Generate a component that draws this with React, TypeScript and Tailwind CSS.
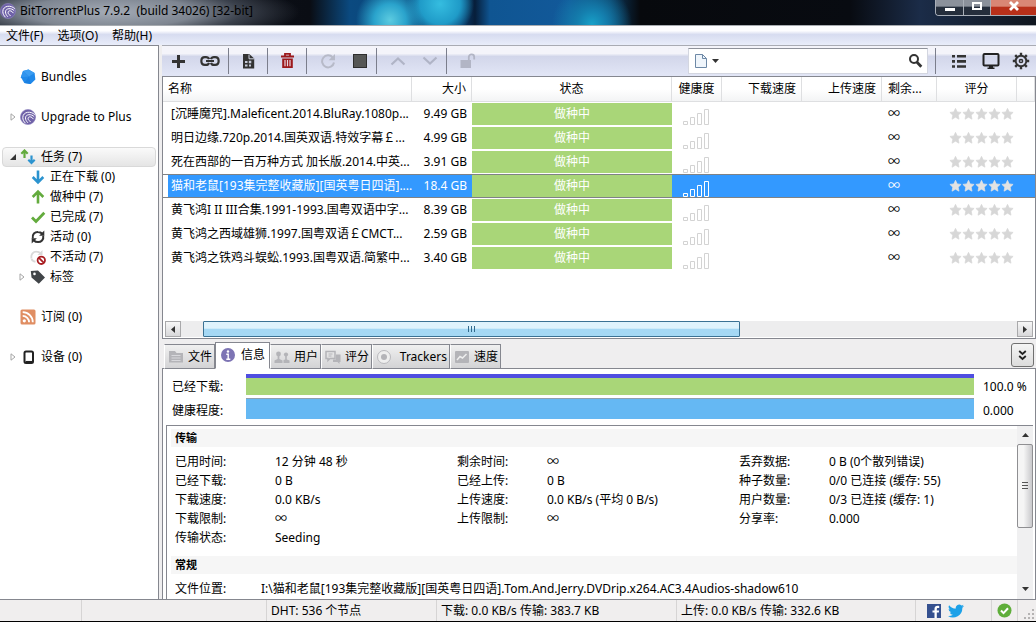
import React, { useState } from 'react';

interface Torrent {
  name: string;
  size: string;
}

interface IconProps {
  className?: string;
}

const TORRENTS: Torrent[] = [
  { name: '[沉睡魔咒].Maleficent.2014.BluRay.1080p...', size: '9.49 GB' },
  { name: '明日边缘.720p.2014.国英双语.特效字幕￡...', size: '4.99 GB' },
  { name: '死在西部的一百万种方式 加长版.2014.中英...', size: '3.91 GB' },
  { name: '猫和老鼠[193集完整收藏版][国英粤日四语]....', size: '18.4 GB' },
  { name: '黄飞鸿I II III合集.1991-1993.国粤双语中字...', size: '8.39 GB' },
  { name: '黄飞鸿之西域雄狮.1997.国粤双语￡CMCT...', size: '2.59 GB' },
  { name: '黄飞鸿之铁鸡斗蜈蚣.1993.国粤双语.简繁中...', size: '3.40 GB' },
];

const STATS: [string, string][][] = [
  [
    ['已用时间:', '12 分钟 48 秒'],
    ['已经下载:', '0 B'],
    ['下载速度:', '0.0 KB/s'],
    ['下载限制:', '∞'],
    ['传输状态:', 'Seeding'],
  ],
  [
    ['剩余时间:', '∞'],
    ['已经上传:', '0 B'],
    ['上传速度:', '0.0 KB/s (平均 0 B/s)'],
    ['上传限制:', '∞'],
  ],
  [
    ['丢弃数据:', '0 B (0个散列错误)'],
    ['种子数量:', '0/0 已连接 (缓存: 55)'],
    ['用户数量:', '0/3 已连接 (缓存: 1)'],
    ['分享率:', '0.000'],
  ],
];

/* ---------- Icons ---------- */

const BtLogo: React.FC<IconProps> = ({ className }) => (
  <svg className={className} viewBox="0 0 16 16" fill="none" stroke="#fff" strokeLinecap="round">
    <circle cx="8" cy="8" r="7.6" fill="#6f62a8" stroke="#8f84c0" strokeWidth=".6" />
    <path d="M14.500 5.500C11 1.600 3 2.600 2.800 8.400c0 2.500 1 4.200 2.500 5.600" strokeWidth="1" />
    <path d="M14 7.500C11.500 4.600 5.600 5 5.500 8.900c0 1.900.8 3.200 2.100 4.600" strokeWidth="1" />
    <path d="M13.200 9.800C11.600 7 8 7.200 8.100 9.600c.1 1.300.9 2.200 2.200 2.900" strokeWidth="1" />
  </svg>
);

const Bundle = () => (
  <svg className="size-4" viewBox="0 0 16 16">
    <path d="M8.500.6 14.600 4l.8 6.500-4.700 4.600-6.400-1L.9 8.300 3 2z" fill="#2089ea" />
    <path d="M8.500.6 14.600 4 9 7.500 3 2z" fill="#3b9df2" />
    <path d="M9 7.500.9 8.300 3 2z" fill="#3094ee" />
    <path d="m9 7.500 1.700 7.600-6.400-1z" fill="#1a80e2" />
  </svg>
);

const Tasks = () => (
  <svg className="size-4" viewBox="0 0 16 16" fill="none" strokeWidth="2.200">
    <path d="M4.500 9V1.500M1.300 4.700 4.500 1.500l3.200 3.200" stroke="#63ab3d" />
    <path d="M11.500 6.500V14M8.300 10.800 11.500 14l3.200-3.200" stroke="#2b93cf" />
  </svg>
);

const ArrowDown = () => (
  <svg className="size-4" viewBox="0 0 16 16" fill="none" stroke="#2b93cf" strokeWidth="2.600">
    <path d="M8 1.500V13M2.700 8 8 13.300 13.300 8" />
  </svg>
);

const ArrowUp = () => (
  <svg className="size-4" viewBox="0 0 16 16" fill="none" stroke="#63ab3d" strokeWidth="2.600">
    <path d="M8 14.500V3M2.700 8 8 2.700 13.300 8" />
  </svg>
);

const Check = () => (
  <svg className="size-4" viewBox="0 0 16 16" fill="none" stroke="#63ab3d" strokeWidth="2.800">
    <path d="m2 8.500 4 4L14.300 3.800" />
  </svg>
);

const Cycle = () => (
  <svg className="size-4" viewBox="0 0 16 16">
    <g fill="none" stroke="#333" strokeWidth="2">
      <path d="M2.800 9.500C1.900 5 5 2.800 8 2.900c1.900 0 3.200.7 4.300 1.900" />
      <path d="M13.200 6.800C14 11 11 13.200 8 13.100c-1.900 0-3.200-.7-4.300-1.900" />
    </g>
    <path d="M14.300 1.500v5.200H9.100zM1.700 14.500V9.300h5.200z" fill="#333" />
  </svg>
);

const Inactive = () => (
  <svg className="size-4" viewBox="0 0 16 16">
    <g fill="none" stroke="#d9d9d9" strokeWidth="1.800">
      <path d="M1.500 9.500C.6 5 3.500 2.600 6.500 2.700c1.900 0 3.200.7 4.300 1.900M1.500 10c1 1.800 2.500 2.700 4 2.700" />
    </g>
    <path d="M12.500 1v5H7.500z" fill="#d9d9d9" />
    <circle cx="11.300" cy="11.300" r="3.700" fill="#fff" stroke="#a91e22" strokeWidth="1.800" />
    <path d="m8.700 8.700 5.200 5.200" stroke="#a91e22" strokeWidth="1.800" />
  </svg>
);

const Tag = () => (
  <svg className="size-4" viewBox="0 0 16 16">
    <path fillRule="evenodd" d="M.8 2 8 1.500l7 6.900-6.200 6.400L1.500 8.500zM4.500 3.600a1.300 1.300 0 1 0 0 2.600 1.300 1.300 0 0 0 0-2.600z" fill="#414548" />
  </svg>
);

const Rss = () => (
  <svg className="size-4" viewBox="0 0 16 16">
    <rect x=".5" y=".5" width="15" height="15" rx="1.500" fill="#e08e63" />
    <circle cx="4.300" cy="11.800" r="1.600" fill="#fff" />
    <path d="M2.700 6.900a6.400 6.400 0 0 1 6.400 6.400M2.700 3.200A10.100 10.100 0 0 1 12.800 13.300" fill="none" stroke="#fff" strokeWidth="1.800" />
  </svg>
);

const Device = () => (
  <svg className="size-4" viewBox="0 0 16 16">
    <rect x="4.500" y="2.500" width="8.500" height="11.500" rx="1.500" fill="#fff" stroke="#222" strokeWidth="2" />
    <path d="M5.500 12.700h6.500" stroke="#222" strokeWidth="1.500" />
  </svg>
);

const Twisty = () => (
  <svg className="w-1.5 h-2" viewBox="0 0 6 8">
    <path d="M1 .8v6.400L5 4z" fill="#fff" stroke="#a5a5a5" />
  </svg>
);

const TwistyOpen = () => (
  <svg className="w-1.5 h-2" viewBox="0 0 6 8">
    <path d="M6 1v6H0z" fill="#333" />
  </svg>
);

const PlusIcon = () => (
  <svg className="size-4" viewBox="0 0 16 16">
    <path d="M8.500 2v13M2 8.500h13" stroke="#333" strokeWidth="3" />
  </svg>
);

const LinkIcon = () => (
  <svg className="w-5 h-4" viewBox="0 0 20 16" fill="none" stroke="#333" strokeWidth="2.200">
    <path d="M9 6.200C8.500 4.700 7.500 4.100 6 4.100H4.800C.2 4.100.2 11.900 4.800 11.900H6c1.500 0 2.500-.6 3-2.100M11 6.200c.5-1.500 1.500-2.100 3-2.100h1.200c4.600 0 4.600 7.800 0 7.800H14c-1.500 0-2.500-.6-3-2.100M6 8h8" />
  </svg>
);

const FileIcon = () => (
  <svg className="size-4" viewBox="0 0 16 16">
    <path d="M3 1h6.300l4.900 4.500V15.500H3z" fill="#333" />
    <path d="M9 1.500v4.300h5" fill="none" stroke="#dfe3f3" strokeWidth=".9" />
    <path d="M5 8h2.500v2H5zM8.800 7.700h2.500v2.600H8.800zM5 11.500h2.500v2H5zM9 11.500h2v2H9z" fill="#c5c9d8" />
  </svg>
);

const TrashIcon = () => (
  <svg className="size-4" viewBox="0 0 16 16">
    <path d="M6 2.500V.8h5v1.700M2 3.500h13" fill="none" stroke="#9c191c" strokeWidth="1.800" />
    <path d="M3.200 5.500h10.600V15H3.200z" fill="#9c191c" />
    <path d="M6 7v6.200M8.500 7v6.200M11 7v6.200" stroke="#e8d4de" strokeWidth="1.200" />
  </svg>
);

const RefreshIcon = () => (
  <svg className="size-4" viewBox="0 0 16 16">
    <path d="M12.700 4.500A6 6 0 1 0 14 9.500" fill="none" stroke="#b7bac8" strokeWidth="2" />
    <path d="M15 1v6.300H8.700z" fill="#b7bac8" />
  </svg>
);

const StopIcon = () => (
  <svg className="size-4" viewBox="0 0 16 16">
    <rect x="1.500" y="1.500" width="13" height="13" fill="#565756" stroke="#2e2e2e" />
  </svg>
);

const ChevronIcon: React.FC<{ up?: boolean }> = ({ up }) => (
  <svg className="size-4" viewBox="0 0 16 16" fill="none" stroke="#b0b4c6" strokeWidth="2.200">
    <path d={up ? 'm1.500 11.500 6.500-6 6.500 6' : 'm1.500 4.500 6.500 6 6.500-6'} />
  </svg>
);

const LockIcon = () => (
  <svg className="size-4" viewBox="0 0 16 16">
    <rect x=".5" y="7" width="10.500" height="8" fill="#b2b5c5" />
    <path d="M8.800 7V4c0-3.400 5.400-3.400 5.400 0v2.500" fill="none" stroke="#b2b5c5" strokeWidth="1.800" />
  </svg>
);

const SearchIcon = () => (
  <svg className="size-4" viewBox="0 0 16 16" fill="none" stroke="#333">
    <circle cx="7" cy="6" r="4" strokeWidth="2" />
    <path d="m9.800 9 4.500 4.800" strokeWidth="2.800" />
  </svg>
);

const ListIcon = () => (
  <svg className="size-4" viewBox="0 0 16 16" stroke="#333" strokeWidth="2.600">
    <path d="M1 3.300h3M6 3.300h9M1 8.400h3M6 8.400h9M1 13.500h3M6 13.500h9" />
  </svg>
);

const MonitorIcon = () => (
  <svg className="size-[18px]" viewBox="0 0 18 18">
    <rect x="1.500" y="2" width="15" height="11.500" rx="1" fill="none" stroke="#222" strokeWidth="2" />
    <path d="M7 13.500h4v2h1.500V17h-7v-1.500H7z" fill="#222" />
  </svg>
);

const GearIcon = () => (
  <svg className="size-[18px]" viewBox="0 0 18 18" fill="none" stroke="#333">
    <circle cx="9" cy="9" r="5.300" strokeWidth="1.900" />
    <circle cx="9" cy="9" r="1.600" strokeWidth="1.500" />
    <path d="M9 .8v3M9 14.200v3M.8 9h3M14.200 9h3M3.200 3.200l2.100 2.100M12.700 12.700l2.100 2.100M3.200 14.800l2.100-2.100M12.700 5.300l2.100-2.100" strokeWidth="2.400" />
  </svg>
);

const SignalBars: React.FC<{ selected: boolean }> = ({ selected }) => (
  <svg className="w-[27px] h-[17px]" viewBox="0 0 27 17" fill="none" stroke={selected ? '#fff' : '#d3d3d3'}>
    <path d="M.5 13.500h4v3h-4zM7.500 9.500h4v7h-4zM14.500 5.500h4v11h-4zM21.500 1.500h4v15h-4z" />
  </svg>
);

const Stars: React.FC<{ selected: boolean }> = ({ selected }) => (
  <svg className="w-[65px] h-3" viewBox="0 0 65 12" fill={selected ? '#e3e3e3' : '#d7d7d7'} stroke={selected ? '#e3e3e3' : '#d7d7d7'} strokeWidth=".7">
    {[0, 13, 26, 39, 52].map(x => (
      <path key={x} transform={`translate(${x} 0)`} d="m6.500.3 1.700 3.600 3.900.5-2.900 2.800.8 4-3.500-2-3.500 2 .8-4L.9 4.400l3.900-.5z" />
    ))}
  </svg>
);

const FilesTabIcon = () => (
  <svg className="size-4" viewBox="0 0 16 16">
    <path d="M1 2h6l1.500 2H15v9.500H1z" fill="#b4b4b8" />
    <path d="M3.500 6.500h9M3.500 9h9M3.500 11.500h9" stroke="#d8d8dc" />
  </svg>
);

const InfoTabIcon = () => (
  <svg className="size-4" viewBox="0 0 16 16">
    <circle cx="8" cy="8" r="7" fill="#7d74b4" />
    <circle cx="8" cy="4.500" r="1.200" fill="#fff" />
    <path d="M6.300 7.300H8.200v5M6.300 12.200h4" stroke="#fff" strokeWidth="1.400" fill="none" />
  </svg>
);

const PeersTabIcon = () => (
  <svg className="size-4" viewBox="0 0 16 16" fill="#b4b4b8">
    <circle cx="4.500" cy="5" r="2.400" />
    <path d="M3.600 6h1.800v4l3.100 1.500V14H.5v-2.500L3.600 10z" />
    <circle cx="12" cy="5.500" r="2.100" />
    <path d="M11.200 6.500h1.600V10.500l2.700 1V14H9.500v-3l1.700-.5z" />
  </svg>
);

const RatingTabIcon = () => (
  <svg className="size-4" viewBox="0 0 16 16">
    <path d="M1 2.500h9v7H5l-2 2v-2H1z" fill="none" stroke="#b4b4b8" strokeWidth="1.500" />
    <path d="M3.500 5h4M3.500 7h3" stroke="#b4b4b8" />
    <path d="M8 10.500h3v-5h4.500V13h-1v2l-2-2H8z" fill="#b4b4b8" />
  </svg>
);

const TrackersTabIcon = () => (
  <svg className="size-4" viewBox="0 0 16 16">
    <circle cx="8" cy="8" r="6.500" fill="#eee" stroke="#b9b9bd" />
    <circle cx="8" cy="8" r="3" fill="#b4b4b8" />
  </svg>
);

const SpeedTabIcon = () => (
  <svg className="size-4" viewBox="0 0 16 16">
    <rect x="1" y="2" width="14" height="12" rx="1" fill="#b4b4b8" />
    <path d="m3 11 3-3.500 2.500 1.500L12.500 5" fill="none" stroke="#eee" strokeWidth="1.500" />
  </svg>
);

/* ---------- Pieces ---------- */

const ToolButton: React.FC<{ label: string; children: React.ReactNode }> = ({ label, children }) => (
  <button aria-label={label} className="flex h-7 w-8 items-center justify-center">
    {children}
  </button>
);

const ToolDivider = () => <div className="h-[26px] w-px bg-[#7b7e8c]" />;

interface SideItemProps {
  icon: React.ReactNode;
  label: string;
  twisty?: React.ReactNode;
  nested?: boolean;
  active?: boolean;
}

const SideItem: React.FC<SideItemProps> = ({ icon, label, twisty, nested, active }) => (
  <button
    className={`flex h-5 w-full items-center rounded-sm border text-left whitespace-nowrap ${nested ? 'pl-4' : 'pl-[7px]'} ${
      active ? 'border-[#d9d9d9] bg-linear-to-b from-[#fafafa] to-[#e5e5e5]' : 'border-transparent'
    }`}
  >
    <span className="flex w-2 shrink-0">{twisty}</span>
    <span className={`shrink-0 ${nested ? 'ml-[3px]' : 'ml-0.5'}`}>{icon}</span>
    <span className={nested ? 'ml-1' : 'ml-[5px]'}>{label}</span>
  </button>
);

const Sidebar = () => (
  <nav className="w-[159px] shrink-0 border-t border-r border-[#85878f] bg-white px-0.5 pt-[21px]">
    <SideItem icon={<Bundle />} label="Bundles" />
    <div className="mt-5">
      <SideItem icon={<BtLogo className="size-4" />} label="Upgrade to Plus" twisty={<Twisty />} />
    </div>
    <div className="mt-5">
      <SideItem icon={<Tasks />} label="任务 (7)" twisty={<TwistyOpen />} active />
      <SideItem nested icon={<ArrowDown />} label="正在下载 (0)" />
      <SideItem nested icon={<ArrowUp />} label="做种中 (7)" />
      <SideItem nested icon={<Check />} label="已完成 (7)" />
      <SideItem nested icon={<Cycle />} label="活动 (0)" />
      <SideItem nested icon={<Inactive />} label="不活动 (7)" />
      <SideItem nested icon={<Tag />} label="标签" twisty={<Twisty />} />
    </div>
    <div className="mt-5">
      <SideItem icon={<Rss />} label="订阅 (0)" />
    </div>
    <div className="mt-5">
      <SideItem icon={<Device />} label="设备 (0)" twisty={<Twisty />} />
    </div>
  </nav>
);

const TitleBar = () => (
  <header className="flex h-[26px] shrink-0 items-start justify-between border-b border-[#a7abb0] bg-[radial-gradient(ellipse_190px_34px_at_110px_12px,#a4abb6_0%,#8a929ee6_45%,#59616e99_70%,transparent_100%),radial-gradient(circle_at_390px_20px,#5ccbe0_0,#2aa3cc_16px,transparent_34px),radial-gradient(circle_at_440px_4px,#35bde0_0,#1f9bc8_20px,transparent_34px),radial-gradient(circle_at_592px_24px,#18a0c8_0,#147fae_14px,transparent_40px),linear-gradient(to_right,#10151f_0,#0a0d14_310px,#0b4a80_350px,#0a3e72_460px,#071e3a_475px,#0f5592_490px,#12599a_570px,#0c3a60_610px,#07090d_640px,#080b11_850px,#1b2c48_920px,#10161f_100%)]">
    <div className="flex h-[22px] items-center gap-1 text-[12px] text-black">
      <BtLogo className="size-4" />
      <span className="whitespace-pre">BitTorrentPlus 7.9.2  (build 34026) [32-bit]</span>
    </div>
    <div className="flex h-4 overflow-hidden rounded-bl-[4px] border-b border-l border-[#a9afb8]">
      <button aria-label="最小化" className="flex w-7 items-center justify-center border-r border-[#a9afb8] bg-linear-to-b from-[#8b919b] from-40% to-[#252e3c] to-50%">
        <span className="mt-1 h-[3px] w-2.5 bg-white" />
      </button>
      <button aria-label="最大化" className="flex w-[27px] items-center justify-center border-r border-[#a9afb8] bg-linear-to-b from-[#8b919b] from-40% to-[#252e3c] to-50%">
        <span className="mb-1 h-2 w-2.5 border-2 border-white" />
      </button>
      <button aria-label="关闭" className="flex w-[45px] items-center justify-center bg-linear-to-b from-[#d98775] from-40% to-[#b8301a] to-50%">
        <svg className="mb-1 h-2.5 w-3" viewBox="0 0 12 10">
          <path d="m2 1 8 8M10 1 2 9" stroke="#fff" strokeWidth="2.800" />
        </svg>
      </button>
    </div>
  </header>
);

const Toolbar = () => (
  <div className="flex h-[30px] shrink-0 items-center bg-linear-to-b from-[#f4f4fa] from-25% via-[#d2d6ea] via-35% to-[#e2e6f6]">
    <ToolButton label="添加任务"><PlusIcon /></ToolButton>
    <ToolButton label="添加链接"><LinkIcon /></ToolButton>
    <div className="ml-0.5"><ToolDivider /></div>
    <div className="px-[3px]">
      <ToolButton label="制作种子"><FileIcon /></ToolButton>
    </div>
    <ToolDivider />
    <div className="px-[3px]">
      <ToolButton label="删除"><TrashIcon /></ToolButton>
    </div>
    <ToolDivider />
    <div className="flex pl-[5px]">
      <ToolButton label="开始"><RefreshIcon /></ToolButton>
      <ToolButton label="停止"><StopIcon /></ToolButton>
    </div>
    <ToolDivider />
    <div className="flex pl-[5px]">
      <ToolButton label="上移"><ChevronIcon up /></ToolButton>
      <ToolButton label="下移"><ChevronIcon /></ToolButton>
    </div>
    <ToolDivider />
    <div className="pl-[5px]">
      <ToolButton label="解锁"><LockIcon /></ToolButton>
    </div>

    <div className="mr-[7px] ml-auto flex h-[26px] w-60 items-center border border-[#d3d6e0] border-t-[#8f929b] bg-white pr-1 pl-[5px]">
      <button aria-label="搜索类型" className="flex items-center gap-1">
        <svg className="h-4 w-3.5" viewBox="0 0 14 16">
          <path d="M1.500 1.500h7l4 4v9h-11z" fill="#eff5fb" stroke="#6d88a6" />
          <path d="M8.500 1.500v4h4" fill="none" stroke="#6d88a6" />
        </svg>
        <svg className="h-1 w-[7px]" viewBox="0 0 7 4"><path d="M0 0h7L3.500 4z" fill="#333" /></svg>
      </button>
      <input aria-label="搜索" className="h-full min-w-0 flex-1 px-1 outline-none" />
      <button aria-label="搜索"><SearchIcon /></button>
    </div>
    <ToolDivider />
    <div className="flex pl-[7px]">
      <ToolButton label="列表"><ListIcon /></ToolButton>
      <button aria-label="远程" className="flex h-7 w-[31px] items-center justify-center"><MonitorIcon /></button>
      <button aria-label="设置" className="flex h-7 w-[30px] items-center justify-center"><GearIcon /></button>
    </div>
  </div>
);

interface TorrentTableProps {
  selected: number;
  onSelect: (index: number) => void;
}

const TorrentTable: React.FC<TorrentTableProps> = ({ selected, onSelect }) => (
  <table className="w-full table-fixed border-separate border-spacing-0">
    <colgroup>
      <col className="w-[249px]" />
      <col className="w-[60px]" />
      <col className="w-[200px]" />
      <col className="w-[50px]" />
      <col className="w-[80px]" />
      <col className="w-[80px]" />
      <col className="w-[55px]" />
      <col className="w-[80px]" />
      <col />
    </colgroup>
    <thead>
      <tr className="h-[25px] whitespace-nowrap [&>th]:border-r [&>th]:border-b [&>th]:border-[#dedfe1] [&>th]:bg-linear-to-b [&>th]:from-white [&>th]:from-50% [&>th]:to-[#f3f4f5] [&>th]:p-0 [&>th]:font-normal">
        <th className="text-left"><span className="pl-[5px]">名称</span></th>
        <th className="text-right"><span className="pr-[5px]">大小</span></th>
        <th>状态</th>
        <th>健康度</th>
        <th className="text-right"><span className="pr-[5px]">下载速度</span></th>
        <th className="text-right"><span className="pr-[5px]">上传速度</span></th>
        <th className="text-left"><span className="pl-1.5">剩余...</span></th>
        <th>评分</th>
        <th />
      </tr>
    </thead>
    <tbody>
      {TORRENTS.map((t, i) => {
        const isSelected = i === selected;
        return (
          <tr
            key={t.name}
            onClick={() => onSelect(i)}
            className={`h-6 whitespace-nowrap [&>td]:h-6 [&>td]:border-y [&>td]:p-0 ${
              isSelected ? 'bg-[#3399ff] text-white [&>td]:border-[#7f8285]' : '[&>td]:border-transparent'
            }`}
          >
            <td className={`overflow-hidden ${isSelected ? 'bg-linear-to-r from-white from-[5px] to-[#3399ff] to-[5px]' : ''}`}>
              <span className="pl-2">{t.name}</span>
            </td>
            <td className="text-right"><span className="pr-[5px]">{t.size}</span></td>
            <td className="bg-[#a9d678] bg-clip-padding text-center text-white">做种中</td>
            <td><div className="flex h-[22px] items-end pl-[11px]"><SignalBars selected={isSelected} /></div></td>
            <td />
            <td />
            <td><span className="pl-1.5">∞</span></td>
            <td><div className="flex pl-3"><Stars selected={isSelected} /></div></td>
            <td />
          </tr>
        );
      })}
    </tbody>
  </table>
);

const HorizontalScrollbar = () => (
  <div className="mx-0.5 mt-auto flex h-4 shrink-0 bg-[#ededee]">
    <button aria-label="向左滚动" className="flex w-4 items-center justify-center border border-[#a9a9ab] bg-linear-to-b from-[#f7f7f7] to-[#d8d8da]">
      <svg className="h-[7px] w-1" viewBox="0 0 4 7"><path d="M4 0v7L0 3.500z" fill="#333" /></svg>
    </button>
    <div className="flex flex-1 pl-[22px]">
      <div className="flex w-[66%] items-center justify-center gap-0.5 rounded-[1px] border border-[#3b7294] bg-linear-to-b from-[#dff3fc] from-45% to-[#a5d8f4] to-50%">
        <span className="h-1.5 w-px bg-[#316a8c]" />
        <span className="h-1.5 w-px bg-[#316a8c]" />
        <span className="h-1.5 w-px bg-[#316a8c]" />
      </div>
    </div>
    <button aria-label="向右滚动" className="flex w-4 items-center justify-center border border-[#a9a9ab] bg-linear-to-b from-[#f7f7f7] to-[#d8d8da]">
      <svg className="h-[7px] w-1" viewBox="0 0 4 7"><path d="M0 0v7l4-3.500z" fill="#333" /></svg>
    </button>
  </div>
);

const TABS = [
  { id: 'files', label: '文件', icon: <FilesTabIcon />, width: 'w-[51px]' },
  { id: 'info', label: '信息', icon: <InfoTabIcon />, width: 'w-[55px]' },
  { id: 'peers', label: '用户', icon: <PeersTabIcon />, width: 'w-[51px]' },
  { id: 'rating', label: '评分', icon: <RatingTabIcon />, width: 'w-[51px]' },
  { id: 'trackers', label: 'Trackers', icon: <TrackersTabIcon />, width: 'w-[78px]' },
  { id: 'speed', label: '速度', icon: <SpeedTabIcon />, width: 'w-[51px]' },
];

const TabBar = () => {
  const [tab, setTab] = useState('info');

  return (
    <div className="flex h-[30px] shrink-0 items-end border-b border-[#85878f] bg-[#efeeef] pl-0.5">
      <div role="tablist" className="-mb-px flex items-end">
        {TABS.map(t => (
          <button
            key={t.id}
            role="tab"
            aria-selected={tab === t.id}
            onClick={() => setTab(t.id)}
            className={`flex items-center justify-between border border-[#85878f] whitespace-nowrap ${t.width} ${
              tab === t.id
                ? 'h-[27px] border-b-white bg-white px-1 pb-0.5'
                : 'h-[25px] border-l-white bg-linear-to-b from-[#f0f0f0] to-[#d3d3d5] pr-0.5 pl-[3px]'
            }`}
          >
            {t.icon}
            <span>{t.label}</span>
          </button>
        ))}
      </div>
      <button aria-label="收起面板" className="mr-0.5 mb-px ml-auto flex h-6 w-[23px] items-center justify-center rounded-[3px] border border-[#707070] bg-linear-to-b from-[#f5f5f5] to-[#dcdcdc]">
        <svg className="h-[11px] w-[9px]" viewBox="0 0 9 11" fill="none" stroke="#222" strokeWidth="1.800">
          <path d="m1.200 1 3.300 3 3.300-3M1.200 6l3.300 3 3.300-3" />
        </svg>
      </button>
    </div>
  );
};

const SectionTitle: React.FC<{ children: React.ReactNode }> = ({ children }) => (
  <h3 className="h-[18px] bg-[#f6f6f6] pl-1 text-[11px] leading-[18px] font-bold">{children}</h3>
);

const Details = () => (
  <section className="flex min-h-0 flex-1 flex-col border-x border-[#85878f] bg-white pr-0.5 pl-[3px]">
    <div className="grid shrink-0 grid-cols-[74px_1fr_59px] gap-y-[3px] pt-[5px] pb-1.5 pl-1.5 whitespace-nowrap">
      <span className="flex items-center pt-1">已经下载:</span>
      <div className="h-[21px] border-t-4 border-[#4f4ee0] bg-[#a9d678]" />
      <span className="flex items-center pt-1 pl-[9px]">100.0 %</span>
      <span className="flex items-center pt-1">健康程度:</span>
      <div className="h-[21px] border-t border-[#8fa0ad] bg-[#65b8f3]" />
      <span className="flex items-center pt-1 pl-[9px]">0.000</span>
    </div>

    <div className="flex min-h-0 flex-1 border-t border-l border-[#85878f]">
      <div className="min-w-0 flex-1 overflow-hidden pt-[3px] pl-1">
        <SectionTitle>传输</SectionTitle>
        <div className="grid grid-cols-[282px_282px_1fr] pt-[5px] pb-[9px] pl-1 whitespace-nowrap">
          {STATS.map((column, c) => (
            <dl key={c}>
              {column.map(([label, value]) => (
                <div key={label} className="flex h-[19px] items-center">
                  <dt className={c === 0 ? 'w-[100px]' : 'w-[90px]'}>{label}</dt>
                  <dd>{value}</dd>
                </div>
              ))}
            </dl>
          ))}
        </div>
        <SectionTitle>常规</SectionTitle>
        <dl className="flex h-[29px] items-center pl-1 whitespace-nowrap">
          <dt className="w-[86px]">文件位置:</dt>
          <dd>I:\猫和老鼠[193集完整收藏版][国英粤日四语].Tom.And.Jerry.DVDrip.x264.AC3.4Audios-shadow610</dd>
        </dl>
      </div>

      <div className="flex w-4 shrink-0 flex-col bg-[#f0f0f1]">
        <button aria-label="向上滚动" className="flex h-[18px] items-center justify-center">
          <svg className="h-1 w-[7px]" viewBox="0 0 7 4"><path d="M0 4h7L3.500 0z" fill="#333" /></svg>
        </button>
        <div className="flex-1">
          <div className="flex h-[62%] flex-col items-center justify-center gap-0.5 rounded-[2px] border border-[#8f8f92] bg-linear-to-r from-[#f5f5f5] from-40% to-[#c9c9cc]">
            <span className="h-px w-1.5 bg-[#555]" />
            <span className="h-px w-1.5 bg-[#555]" />
            <span className="h-px w-1.5 bg-[#555]" />
          </div>
        </div>
        <button aria-label="向下滚动" className="flex h-5 items-center justify-center">
          <svg className="h-1 w-[7px]" viewBox="0 0 7 4"><path d="M0 0h7L3.500 4z" fill="#333" /></svg>
        </button>
      </div>
    </div>
  </section>
);

const StatusBar = () => (
  <footer className="flex h-[23px] shrink-0 items-stretch border-t border-b border-t-[#85878f] border-b-black bg-[#f0eeee] whitespace-nowrap [&>div]:flex [&>div]:items-center [&>div]:border-r [&>div]:border-[#d6d4d4]">
    <div className="w-[82px]" />
    <div className="w-[185px]" />
    <div className="w-[170px] pl-1">DHT: 536 个节点</div>
    <div className="w-60 pl-1">下载: 0.0 KB/s 传输: 383.7 KB</div>
    <div className="flex-1 pl-1">上传: 0.0 KB/s 传输: 332.6 KB</div>
    <div className="w-[76px] gap-[7px] pl-[11px]">
      <a href="#facebook" aria-label="Facebook">
        <svg className="size-[14px]" viewBox="0 0 14 14">
          <path d="M0 0h14v14H0z" fill="#35508f" />
          <path d="M9.800 14V8.600h2l.3-2.200H9.800V5.100c0-.7.3-1.100 1.200-1.100h1.200V2C9.200 1.500 7.500 2.400 7.500 4.800v1.600h-2v2.200h2V14z" fill="#fff" />
        </svg>
      </a>
      <a href="#twitter" aria-label="Twitter">
        <svg className="size-4" viewBox="0 0 24 24">
          <path fill="#1da1e8" d="M24 4.600a10 10 0 0 1-2.800.8 5 5 0 0 0 2.100-2.700 10 10 0 0 1-3.100 1.200 4.900 4.900 0 0 0-8.400 4.500A14 14 0 0 1 1.700 3.200a4.900 4.900 0 0 0 1.500 6.500 5 5 0 0 1-2.200-.6 4.900 4.900 0 0 0 3.900 4.900 5 5 0 0 1-2.200.1 4.900 4.900 0 0 0 4.600 3.400A10 10 0 0 1 0 19.500a14 14 0 0 0 21.500-12.400A10 10 0 0 0 24 4.600z" />
        </svg>
      </a>
    </div>
    <div className="w-[26px] justify-center">
      <svg className="size-[15px]" viewBox="0 0 15 15">
        <circle cx="7.500" cy="7.500" r="7" fill="#5fae3a" />
        <path d="m4 7.500 2.500 2.600L11 5.200" fill="none" stroke="#fff" strokeWidth="2" />
      </svg>
    </div>
    <span className="flex w-[18px] items-end justify-end">
      <svg className="size-3" viewBox="0 0 12 12" fill="#b5b3b3">
        <path d="M8 0h2v2H8zM8 4h2v2H8zM4 4h2v2H4zM8 8h2v2H8zM4 8h2v2H4zM0 8h2v2H0z" />
      </svg>
    </span>
  </footer>
);

export default function App() {
  const [selected, setSelected] = useState(3);

  return (
    <div className="flex h-screen flex-col overflow-hidden bg-[#efeeef] font-['Noto_Sans','Noto_Sans_CJK_SC',sans-serif] text-[12px] leading-4 text-black">
      <TitleBar />
      <div role="menubar" className="flex h-[19px] shrink-0 items-center gap-[14px] bg-linear-to-b from-[#fdfdff] from-25% via-[#d7dcf0] via-45% to-[#e9edfa] pl-1.5">
        <button role="menuitem">文件(F)</button>
        <button role="menuitem">选项(O)</button>
        <button role="menuitem">帮助(H)</button>
      </div>

      <div className="flex min-h-0 flex-1">
        <Sidebar />
        <main className="ml-[3px] flex min-w-0 flex-1 flex-col border-t border-[#a9abb3]">
          <Toolbar />
          <section className="flex h-[263px] shrink-0 flex-col border border-[#85878f] bg-white pb-px">
            <TorrentTable selected={selected} onSelect={setSelected} />
            <HorizontalScrollbar />
          </section>
          <TabBar />
          <Details />
        </main>
      </div>
      <StatusBar />
    </div>
  );
}
